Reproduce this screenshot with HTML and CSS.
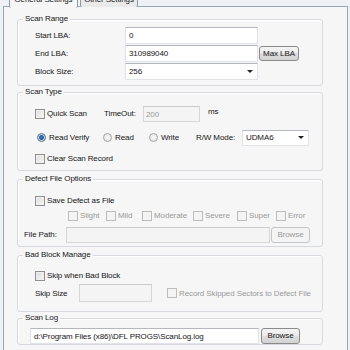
FILE: index.html
```html
<!DOCTYPE html>
<html lang="en">

<head>
    <meta charset="UTF-8">
    <title>Scan Settings</title>
    <link rel="stylesheet" href="styles.css">
</head>

<body>
    <!-- Tabs -->
    <div class="tabs">
        <div class="tab active">General Settings</div>
        <div class="tab">Other Settings</div>
    </div>

    <div class="page">
        <!-- Scan Range -->
        <fieldset class="group range">
            <legend>Scan Range</legend>
            <div class="row">
                <span class="label">Start LBA:</span>
                <div class="field wide">0</div>
            </div>
            <div class="row">
                <span class="label">End LBA:</span>
                <div class="field wide">310989040</div>
                <button class="btn max">Max LBA</button>
            </div>
            <div class="row">
                <span class="label">Block Size:</span>
                <div class="field wide combo">256<span class="arrow"></span></div>
            </div>
        </fieldset>

        <!-- Scan Type -->
        <fieldset class="group type">
            <legend>Scan Type</legend>
            <div class="row">
                <label class="check quick"><span class="box"></span>Quick Scan</label>
                <span class="timeout-label">TimeOut:</span>
                <div class="field off timeout">200</div>
                <span class="unit">ms</span>
            </div>
            <div class="row radios">
                <label class="radio verify"><span class="dot on"></span>Read Verify</label>
                <label class="radio read"><span class="dot"></span>Read</label>
                <label class="radio write"><span class="dot"></span>Write</label>
                <span class="mode-label">R/W Mode:</span>
                <div class="field combo mode">UDMA6<span class="arrow"></span></div>
            </div>
            <div class="row short">
                <label class="check"><span class="box"></span>Clear Scan Record</label>
            </div>
        </fieldset>

        <!-- Defect File Options -->
        <fieldset class="group defect">
            <legend>Defect File Options</legend>
            <div class="row short">
                <label class="check"><span class="box"></span>Save Defect as File</label>
            </div>
            <div class="row short levels">
                <label class="check off slight"><span class="box"></span>Slight</label>
                <label class="check off mild"><span class="box"></span>Mild</label>
                <label class="check off moderate"><span class="box"></span>Moderate</label>
                <label class="check off severe"><span class="box"></span>Severe</label>
                <label class="check off super"><span class="box"></span>Super</label>
                <label class="check off"><span class="box"></span>Error</label>
            </div>
            <div class="row path">
                <span class="path-label">File Path:</span>
                <div class="field off path-field"></div>
                <button class="btn off browse">Browse</button>
            </div>
        </fieldset>

        <!-- Bad Block Manage -->
        <fieldset class="group bad">
            <legend>Bad Block Manage</legend>
            <div class="row short">
                <label class="check"><span class="box"></span>Skip when Bad Block</label>
            </div>
            <div class="row skip">
                <span class="skip-label">Skip Size</span>
                <div class="field off skip-field"></div>
                <label class="check off record"><span class="box"></span>Record Skipped Sectors to Defect File</label>
            </div>
        </fieldset>

        <!-- Scan Log -->
        <fieldset class="group log">
            <legend>Scan Log</legend>
            <div class="row log-row">
                <div class="field log-field">d:\Program Files (x86)\DFL PROGS\ScanLog.log</div>
                <button class="btn browse">Browse</button>
            </div>
        </fieldset>
    </div>
</body>

</html>
```

FILE: styles.css
```css
body {
    font-family: 'Liberation Sans', Arial, sans-serif;
    font-size: 8px;
    letter-spacing: -0.1px;
    margin: 0;
    padding: 0;
    width: 350px;
    height: 350px;
    overflow: hidden;
    background: #eef2f6;
    color: #151515;
}

/* Tabs */
.tabs {
    display: flex;
    margin: -9px 0 0 9px;
    height: 16px;
    position: relative;
    z-index: 1;
}

.tab {
    box-sizing: border-box;
    height: 16px;
    line-height: 16px;
    border: 1px solid #8d99a6;
    border-bottom: none;
    border-radius: 0 0 2px 2px;
    background: #eaeaea;
    text-align: center;
}

.tab.active {
    width: 69px;
    height: 17px;
    background: #f6f6f6;
}

.tab + .tab {
    width: 58px;
    margin-left: 2px;
}

.page {
    box-sizing: border-box;
    width: 345px;
    height: 344px;
    margin-left: 3px;
    margin-top: -1px;
    padding: 6px 0 0 13px;
    border: 1px solid #98a6b5;
    border-bottom: none;
    background: #f6f6f6;
}

/* Group boxes */
.group {
    box-sizing: border-box;
    width: 306px;
    margin: 0;
    padding: 0;
    border: 1px solid #d6d9dd;
    border-radius: 3px;
    box-shadow: inset 1px 1px 0 #fff;
}

.group legend {
    margin-left: 5px;
    padding: 0 2px;
    line-height: 12px;
}

.row {
    display: flex;
    align-items: center;
    height: 17px;
    padding-left: 17px;
}

.row.short {
    height: 13px;
}

.label {
    width: 90px;
}

/* Inputs */
.field {
    box-sizing: border-box;
    height: 17px;
    line-height: 15px;
    padding-left: 3px;
    border: 1px solid #e0e4ea;
    border-top-color: #b4b7bd;
    background: #fff;
    white-space: nowrap;
    overflow: hidden;
}

.field.off {
    background: #f4f4f4;
    border-color: #d6d6d6;
    border-top-color: #cbcbcb;
    color: #9a9a9a;
}

.field.wide {
    width: 133px;
}

.combo {
    display: flex;
    justify-content: space-between;
    align-items: center;
    padding-right: 4px;
}

.arrow {
    width: 0;
    height: 0;
    border-left: 3px solid transparent;
    border-right: 3px solid transparent;
    border-top: 3px solid #222;
}

/* Buttons */
.btn {
    box-sizing: border-box;
    width: 39px;
    height: 16px;
    margin-left: 1px;
    padding: 0;
    font: inherit;
    letter-spacing: inherit;
    color: #151515;
    border: 1px solid #8a8a8a;
    border-radius: 3px;
    background: linear-gradient(#f4f4f4, #ececec 45%, #dedede 50%, #d3d3d3);
}

.btn.off {
    border-color: #c2c6c9;
    background: #f4f4f4;
    color: #9a9a9a;
}

.btn.max {
    width: 40px;
    height: 15px;
}

/* Check boxes and radios */
.check,
.radio {
    display: flex;
    align-items: center;
}

.box {
    box-sizing: border-box;
    width: 10px;
    height: 10px;
    margin-right: 2px;
    border: 1px solid #8e8f8f;
    background: linear-gradient(135deg, #dcdcdc, #f7f7f7);
    box-shadow: inset 0 0 0 1px #f0f0f0;
}

.check.off {
    color: #9a9a9a;
}

.check.off .box {
    border-color: #bcbcbc;
    background: #f4f4f4;
    box-shadow: none;
}

.dot {
    box-sizing: border-box;
    width: 9px;
    height: 9px;
    margin: 0 3px 0 1px;
    border: 1px solid #a5a5a5;
    border-radius: 50%;
    background: radial-gradient(#fbfbfb, #dcdcdc);
}

.dot.on {
    border-color: #5b6f86;
    background: radial-gradient(circle, #3a7bc4 0, #2a5f9f 2px, #c9dbef 3px, #e8eef5 4px);
}

/* Scan Range */
.range .row:first-of-type {
    margin-top: 2px;
}

.range .row + .row {
    margin-top: 1px;
}

.range .row:last-child {
    margin-bottom: 5px;
}

/* Scan Type */
.type .row:first-of-type {
    margin-top: 7px;
}

.quick {
    width: 69px;
}

.timeout-label {
    width: 39px;
}

.timeout {
    width: 57px;
    height: 16px;
    padding-left: 2px;
}

.unit {
    margin: -4px 0 0 8px;
}

.radios {
    margin-top: 7px;
    padding-left: 18px;
}

.verify {
    width: 66px;
}

.read {
    width: 46px;
}

.write {
    width: 48px;
}

.mode-label {
    width: 46px;
}

.mode {
    width: 67px;
    height: 16px;
}

.type .short {
    margin-top: 6px;
    margin-bottom: 5px;
}

/* Defect */
.defect {
    margin-top: 2px;
}

.defect .row:first-of-type {
    margin-top: 9px;
}

.levels {
    margin-top: 2px;
    padding-left: 50px;
}

.slight {
    width: 38px;
}

.mild {
    width: 36px;
}

.moderate {
    width: 51px;
}

.severe {
    width: 44px;
}

.super {
    width: 39px;
}

.path {
    margin: 4px 0 3px;
    padding-left: 6px;
}

.path-label {
    width: 42px;
}

.path-field {
    width: 204px;
    height: 16px;
}

/* Bad Block */
.bad {
    margin-top: 2px;
}

.bad .row:first-of-type {
    margin-top: 8px;
}

.skip {
    margin: 2px 0 9px;
    height: 18px;
}

.skip-label {
    width: 44px;
}

.skip-field {
    width: 73px;
    height: 18px;
}

.record {
    margin-left: 15px;
}

/* Scan Log */
.log-row {
    margin-top: 3px;
    padding-left: 12px;
}

.log-field {
    width: 229px;
    height: 16px;
}

.log-row .btn {
    margin-left: 2px;
}
```
